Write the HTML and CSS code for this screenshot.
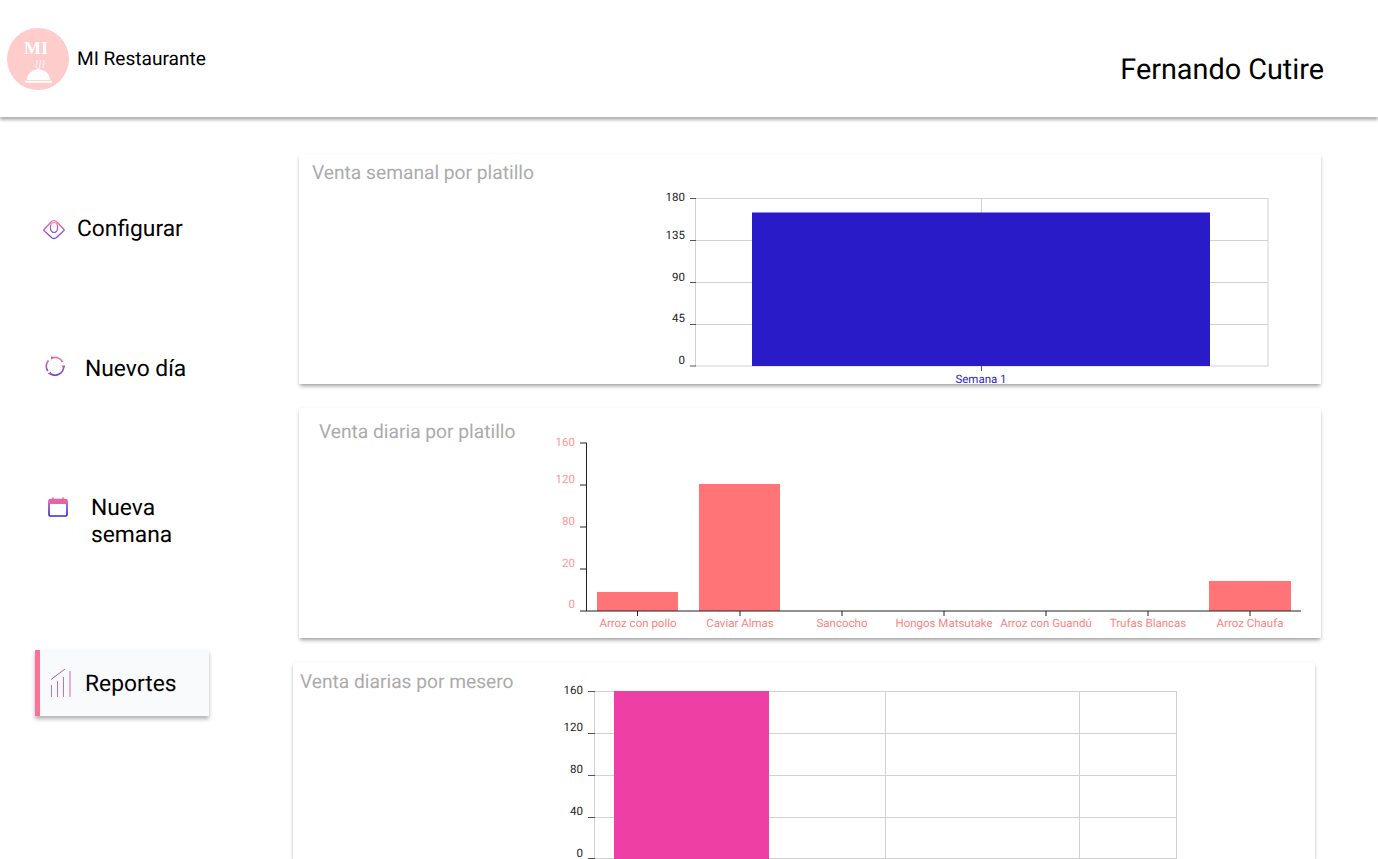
FILE: index.html
```html
<!DOCTYPE html>
<html lang="es">
<head>
<meta charset="utf-8">
<title>MI Restaurante</title>
<link rel="stylesheet" href="styles.css">
</head>
<body>
<svg class="defs" width="0" height="0" aria-hidden="true">
  <defs>
    <linearGradient id="g1" x1="0" y1="0" x2="0" y2="1"><stop offset="0" stop-color="#f06ea6"/><stop offset="1" stop-color="#7a3fd8"/></linearGradient>
    <linearGradient id="g2" x1="0" y1="0" x2="0" y2="1"><stop offset="0" stop-color="#ea5fa0"/><stop offset=".45" stop-color="#8a45c8"/><stop offset="1" stop-color="#3524e4"/></linearGradient>
    <linearGradient id="g3" x1="0" y1="1" x2="0" y2="0"><stop offset="0" stop-color="#f265a5"/><stop offset="1" stop-color="#b86ac0"/></linearGradient>
  </defs>
</svg>
<header class="topbar">
  <div class="brand">
    <svg class="logo" viewBox="0 0 62 62" width="62" height="62">
      <circle cx="31" cy="31" r="31" fill="#ffcccc"/>
      <text x="29" y="25.500" class="logo-text" text-anchor="middle">MI</text>
      <path d="M29.500 40c-2-3 2-4 0-8M33 40c-2-3 2-4 0-8M36.500 40c-2-3 2-4 0-8" fill="none" stroke="#fff" stroke-width=".9"/>
      <circle cx="31" cy="41.500" r="1.300" fill="#fff"/>
      <path d="M20 52c0-6 5-10.500 11.500-10.500S43 46 43 52z" fill="#fff"/>
      <rect x="18" y="52.800" width="27" height="2" fill="#fff"/>
    </svg>
    <span class="brand-name">MI Restaurante</span>
  </div>
  <div class="user">Fernando Cutire</div>
</header>
<div class="layout">
  <nav class="sidebar">
    <a class="item item-config">
      <svg class="icon" viewBox="0 0 24 24" width="24" height="24">
        <path d="M2 12.500 8.800 5.200Q12 2 15.200 5.200L22 12.500Q22.600 13 22 13.500L14.500 20.500Q12 22.500 9.500 20.500L2 13.500Q1.400 13 2 12.500z" fill="none" stroke="url(#g1)" stroke-width="1.300"/>
        <ellipse cx="12" cy="10.500" rx="3.600" ry="5" fill="none" stroke="url(#g1)" stroke-width="1.200"/>
      </svg>
      <span>Configurar</span>
    </a>
    <a class="item item-day">
      <svg class="icon" viewBox="0 0 20 20" width="20" height="20">
        <path d="M8 1.700A8.500 8.500 0 0 1 17.500 6M18.600 10.500A8.500 8.500 0 0 1 5.500 17.800M2.800 15A8.500 8.500 0 0 1 3.500 4.500" fill="none" stroke="url(#g1)" stroke-width="1.700"/>
        <path d="M9 1.800 6 .2V3.600zM18.800 12.500 16.600 9.500H20.600zM2.500 17.500 6 15.800V19.300z" fill="#b24fc4"/>
      </svg>
      <span>Nuevo día</span>
    </a>
    <a class="item item-week">
      <svg class="icon" viewBox="0 0 20 20" width="20" height="20">
        <rect x="1" y="2.500" width="18" height="16.500" rx="1.500" fill="none" stroke="url(#g2)" stroke-width="1.700"/>
        <rect x="1" y="2.500" width="18" height="4.500" fill="#e565a4"/>
        <path d="M5 .5v2.500M15 .5v2.500" stroke="#e565a4" stroke-width="1.500"/>
      </svg>
      <span class="wrap">Nueva semana</span>
    </a>
    <a class="item item-report">
      <svg class="icon" viewBox="0 0 22 30" width="22" height="30">
        <path d="M1 11.500 15 1" fill="none" stroke="#a65bc8" stroke-width="1"/>
        <path d="M1.500 17v12M7.500 13v16M13.500 9v20M20 3v26" fill="none" stroke="url(#g3)" stroke-width="1"/>
      </svg>
      <span>Reportes</span>
    </a>
  </nav>
  <main class="content">
    <section class="card card-week">
      <h2 class="card-title">Venta semanal por platillo</h2>
      <svg class="chart" viewBox="660 185 640 204" width="640" height="204">
        <g class="grid">
          <path d="M695.500 198.500H1268M695.500 240.500H1268M695.500 282.500H1268M695.500 324.500H1268M695.500 366H1268M695.500 198V366M981.500 198V366M1268 198V366"/>
        </g>
        <rect x="752" y="212.500" width="458" height="153.500" fill="#2a1bc9"/>
        <path class="tick" d="M690 198.500h6M690 240.500h6M690 282.500h6M690 324.500h6M690 366h6M981.500 366v5"/>
        <g class="label-dark">
          <text x="685" y="201">180</text><text x="685" y="239">135</text><text x="685" y="281">90</text><text x="685" y="322">45</text><text x="685" y="364">0</text>
        </g>
        <text class="label-blue" x="981" y="383">Semana 1</text>
      </svg>
    </section>
    <section class="card card-day">
      <h2 class="card-title">Venta diaria por platillo</h2>
      <svg class="chart" viewBox="545 430 770 205" width="770" height="205">
        <rect class="bar-red" x="597" y="592" width="81" height="19"/>
        <rect class="bar-red" x="699" y="484" width="81" height="127"/>
        <rect class="bar-red" x="1209" y="581" width="82" height="30"/>
        <path class="axis" d="M586.500 443V611M580 443h7M580 485h7M580 527h7M580 569h7M580 611H1301"/>
        <path class="axis" d="M637.500 611v5M740 611v5M842 611v5M944 611v5M1046 611v5M1148 611v5M1250 611v5"/>
        <g class="label-red">
          <text x="575" y="446">160</text><text x="575" y="483">120</text><text x="575" y="525">80</text><text x="575" y="567">20</text><text x="575" y="608">0</text>
        </g>
        <g class="label-red-mid">
          <text x="638" y="627">Arroz con pollo</text><text x="740" y="627">Caviar Almas</text><text x="842" y="627">Sancocho</text><text x="944" y="627">Hongos Matsutake</text><text x="1046" y="627">Arroz con Guandú</text><text x="1148" y="627">Trufas Blancas</text><text x="1250" y="627">Arroz Chaufa</text>
        </g>
      </svg>
    </section>
    <section class="card card-waiter">
      <h2 class="card-title">Venta diarias por mesero</h2>
      <svg class="chart" viewBox="550 680 640 179" width="640" height="179">
        <g class="grid">
          <path d="M594.500 691.500H1177M594.500 733.500H1177M594.500 775.500H1177M594.500 817.500H1177M594.500 858.500H1177M594.500 691V859M885.500 691V859M1079.500 691V859M1176.500 691V859"/>
        </g>
        <rect x="614" y="691" width="155" height="168" fill="#ee40a4"/>
        <path class="tick" d="M588 691.500h7M588 733.500h7M588 775.500h7M588 817.500h7M588 858.500h7"/>
        <g class="label-dark">
          <text x="583" y="694">160</text><text x="583" y="731">120</text><text x="583" y="773">80</text><text x="583" y="815">40</text><text x="583" y="857">0</text>
        </g>
      </svg>
    </section>
  </main>
</div>
</body>
</html>
```
FILE: styles.css
```css
* { box-sizing: border-box; }
html, body { margin: 0; height: 100%; }
body {
  height: 859px;
  overflow: hidden;
  background: #fff;
  color: #000;
  font-family: Roboto, "Liberation Sans", sans-serif;
  text-rendering: geometricPrecision;
}
.defs { display: block; height: 0; }

.topbar {
  height: 117px;
  display: flex;
  justify-content: space-between;
  background: #fff;
  box-shadow: 0 3px 3px rgba(0, 0, 0, 0.3);
  position: relative;
}
.brand { display: flex; align-items: flex-start; padding: 28px 0 0 7px; }
.logo { display: block; }
.logo-text { font-family: "Liberation Serif", serif; font-weight: 700; font-size: 18px; fill: #fff; }
.brand-name { font-size: 19.100px; line-height: 21px; margin: 20px 0 0 8px; }
.user { font-size: 28.800px; line-height: 33px; margin: 54px 54px 0 0; }

.layout { display: flex; align-items: flex-start; }

.sidebar { width: 299px; flex: none; display: flex; flex-direction: column; padding-top: 98px; }
.item { display: flex; align-items: flex-start; font-size: 22.800px; line-height: 27px; }
.icon { display: block; flex: none; }
.item-config { margin-left: 42px; gap: 11px; }
.item-config .icon { margin-top: 2px; }
.item-day { margin: 113px 0 0 45px; gap: 20px; }
.item-day .icon { margin-top: 1px; }
.item-week { margin: 112px 0 0 48px; gap: 23px; }
.item-week .icon { margin-top: 3px; }
.wrap { width: 110px; }
.item-report {
  width: 174px;
  height: 66px;
  margin: 102px 0 0 35px;
  padding: 20px 0 0 10px;
  gap: 13px;
  background: #f9fafc;
  border-left: 5px solid #ff7099;
  box-shadow: 0 3px 4px rgba(0, 0, 0, 0.3);
}
.item-report .icon { margin-top: -2px; }

.content { display: flex; flex-direction: column; gap: 24px; padding-top: 37px; }
.card {
  width: 1022px;
  height: 230px;
  display: flex;
  align-items: flex-start;
  background: #fff;
  box-shadow: 0 3px 4px -1px rgba(0, 0, 0, 0.38), 0 0 2px rgba(0, 0, 0, 0.06);
  flex: none;
}
.card-title { margin: 0; font-size: 19.200px; line-height: 22px; font-weight: 400; color: #ababab; white-space: nowrap; flex: none; }
.chart { display: block; flex: none; }

.card-week .card-title { width: 361px; padding: 8px 0 0 13px; }
.card-week .chart { margin-top: 31px; }
.card-day .card-title { width: 246px; padding: 13px 0 0 20px; }
.card-day .chart { margin-top: 22px; }
.card-waiter { margin-left: -6px; height: 197px; }
.card-waiter .card-title { width: 257px; padding: 9px 0 0 7px; }
.card-waiter .chart { margin-top: 18px; }

.grid path { fill: none; stroke: #d2d2d2; stroke-width: 1; }
.tick { fill: none; stroke: #555; stroke-width: 1; }
.axis { fill: none; stroke: #222; stroke-width: 1; }
.bar-red { fill: #ff7577; }
.label-dark text { font-size: 11.500px; text-anchor: end; fill: #222; }
.label-blue { font-size: 11.500px; text-anchor: middle; fill: #2a1bc9; }
.label-red text { font-size: 11.500px; text-anchor: end; fill: #ff9496; }
.label-red-mid text { font-size: 11.500px; text-anchor: middle; fill: #ff7f80; }
```
